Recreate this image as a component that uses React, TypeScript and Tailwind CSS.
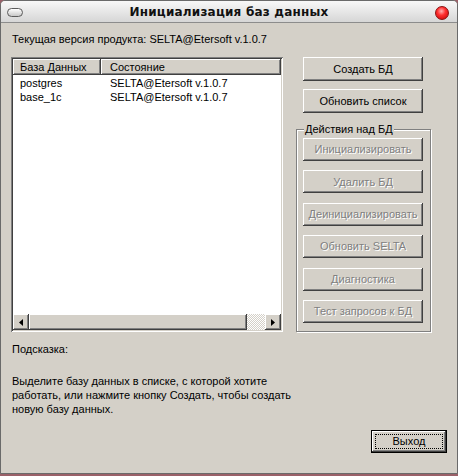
import React from "react";

const raised =
  "bg-[#d4d0c8] shadow-[inset_-1px_-1px_#404040,inset_1px_1px_#ffffff,inset_-2px_-2px_#808080,inset_2px_2px_#d4d0c8]";

const Button: React.FC<{ label: string; disabled?: boolean; h?: string }> = ({ label, disabled, h }) => (
  <div
    className={`${raised} w-[120px] ${h ?? "h-[23px]"} flex items-center justify-center text-[11px] ${
      disabled ? "text-[#808080] [text-shadow:1px_1px_0_#ffffff]" : "text-black"
    }`}
  >
    {label}
  </div>
);

const Arrow: React.FC<{ dir: "left" | "right" }> = ({ dir }) => (
  <div className={`${raised} w-[16px] h-[16px] flex items-center justify-center`}>
    <svg width="4" height="7" viewBox="0 0 4 7">
      {dir === "left" ? <path d="M4 0 L0 3.5 L4 7 Z" fill="#000" /> : <path d="M0 0 L4 3.5 L0 7 Z" fill="#000" />}
    </svg>
  </div>
);

const rows = [
  { name: "postgres", state: "SELTA@Etersoft v.1.0.7" },
  { name: "base_1c", state: "SELTA@Etersoft v.1.0.7" },
];

export default function App() {
  return (
    <div className="w-[458px] h-[476px] bg-[#9a6068] font-['Liberation_Sans',Arial,sans-serif] text-[11px] text-black">
      <div className="w-[458px] h-[474px] flex flex-col rounded-t-[5px] overflow-hidden border border-[#6a6a6a] bg-[#d4d0c8]">
        {/* title bar */}
        <div className="h-[22px] shrink-0 relative flex items-center justify-center bg-gradient-to-b from-[#f8f8f8] to-[#d6d6d6] border-b border-[#8c8c8c]">
          <div className="absolute left-[6px] top-[7px] w-[16px] h-[9px] rounded-full border border-[#5a5a5a] bg-gradient-to-b from-[#ffffff] to-[#c8c8c8]" />
          <div className="font-['DejaVu_Sans',sans-serif] font-bold text-[12px] text-[#111] tracking-[0.2px]">
            Инициализация баз данных
          </div>
          <div className="absolute right-[8px] top-[5px] w-[14px] h-[14px] rounded-full border border-[#8a1010] bg-[radial-gradient(circle_at_45%_35%,#ffb0b0_0%,#ff3030_40%,#c00000_100%)]" />
        </div>

        {/* body */}
        <div className="flex-1 flex flex-col pl-[10px] pr-[10px]">
          <div className="mt-[9px] h-[14px] leading-[14px] pl-[1px]">
            Текущая версия продукта: SELTA@Etersoft v.1.0.7
          </div>

          <div className="mt-[11px] flex">
            {/* list view */}
            <div className="w-[272px] h-[275px] bg-white flex flex-col p-[2px] shadow-[inset_1px_1px_#808080,inset_-1px_-1px_#ffffff,inset_2px_2px_#404040,inset_-2px_-2px_#d4d0c8]">
              <div className="flex h-[16px] shrink-0">
                <div className={`${raised} w-[88px] pl-[7px] leading-[16px]`}>База Данных</div>
                <div className={`${raised} flex-1 pl-[9px] leading-[16px]`}>Состояние</div>
              </div>
              <div className="flex-1 pt-[1px]">
                {rows.map((r) => (
                  <div key={r.name} className="flex h-[14px] leading-[14px]">
                    <div className="w-[88px] pl-[7px]">{r.name}</div>
                    <div className="pl-[9px]">{r.state}</div>
                  </div>
                ))}
              </div>
              <div className="flex h-[16px] shrink-0">
                <Arrow dir="left" />
                <div className={`${raised} w-[218px] h-[16px]`} />
                <div className="flex-1 bg-[repeating-conic-gradient(#ffffff_0_25%,#d4d0c8_0_50%)] bg-[length:2px_2px]" />
                <Arrow dir="right" />
              </div>
            </div>

            {/* right column */}
            <div className="ml-[13px] w-[135px] flex flex-col">
              <div className="pl-[7px] flex flex-col gap-[8px]">
                <Button label="Создать БД" h="h-[24px]" />
                <Button label="Обновить список" h="h-[24px]" />
              </div>
              <div className="relative mt-[16px] h-[203px] border border-[#808080] shadow-[inset_1px_1px_#ffffff,1px_1px_#ffffff] pl-[6px] pt-[8px] flex flex-col gap-[9.4px]">
                <div className="absolute -top-[8px] left-[7px] px-[1px] bg-[#d4d0c8] leading-[14px]">Действия над БД</div>
                <Button label="Инициализировать" disabled />
                <Button label="Удалить БД" disabled />
                <Button label="Деинициализировать" disabled />
                <Button label="Обновить SELTA" disabled />
                <Button label="Диагностика" disabled />
                <Button label="Тест запросов к БД" disabled />
              </div>
            </div>
          </div>

          <div className="mt-[10px] h-[14px] leading-[14px] pl-[1px]">Подсказка:</div>
          <div className="mt-[18px] leading-[14px] pl-[1px]">
            Выделите базу данных в списке, с которой хотите
            <br />
            работать, или нажмите кнопку Создать, чтобы создать
            <br />
            новую базу данных.
          </div>

          <div className="mt-[14px] flex justify-end">
            <div className="w-[76px] h-[23px] border border-black">
              <div className={`${raised} w-full h-full p-[3px]`}>
                <div className="w-full h-full border border-dotted border-black flex items-center justify-center text-[11px]">
                  Выход
                </div>
              </div>
            </div>
          </div>
        </div>
      </div>
    </div>
  );
}
